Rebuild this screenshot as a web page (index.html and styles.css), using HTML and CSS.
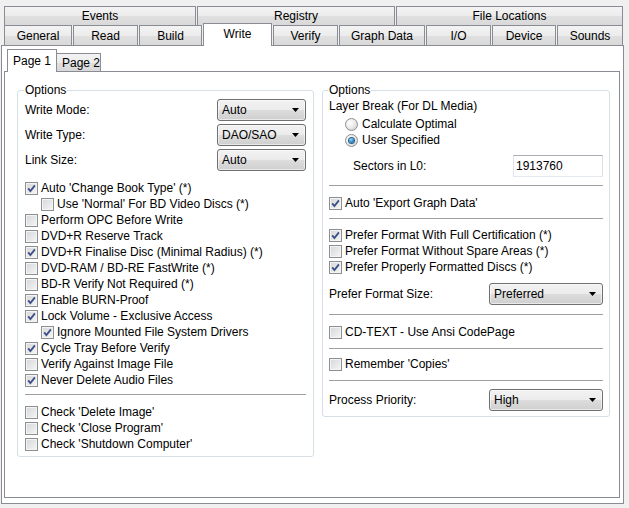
FILE: index.html
```html
<!DOCTYPE html>
<html>
<head>
<meta charset="utf-8">
<link rel="stylesheet" href="styles.css">
</head>
<body>
<div class="window">
  <div class="tabrow row1">
    <div class="tab t-events">Events</div>
    <div class="tab t-registry">Registry</div>
    <div class="tab t-files">File Locations</div>
  </div>
  <div class="tabrow row2">
    <div class="tab t-general">General</div>
    <div class="tab t-read">Read</div>
    <div class="tab t-build">Build</div>
    <div class="tab t-write sel">Write</div>
    <div class="tab t-verify">Verify</div>
    <div class="tab t-graph">Graph Data</div>
    <div class="tab t-io">I/O</div>
    <div class="tab t-device">Device</div>
    <div class="tab t-sounds">Sounds</div>
  </div>
  <div class="panel">
    <div class="subtabs">
      <div class="stab p1 sel">Page 1</div>
      <div class="stab p2">Page 2</div>
    </div>
    <div class="page">
      <div class="cols">
        <div class="group gleft">
          <div class="legend">Options</div>
          <div class="frows">
            <div class="frow"><span>Write Mode:</span><div class="select sel-s"><span>Auto</span><svg class="arrow" width="7" height="4" viewBox="0 0 7 4"><polygon points="0,0 7,0 3.5,4" fill="#000"/></svg></div></div>
            <div class="frow"><span>Write Type:</span><div class="select sel-s"><span>DAO/SAO</span><svg class="arrow" width="7" height="4" viewBox="0 0 7 4"><polygon points="0,0 7,0 3.5,4" fill="#000"/></svg></div></div>
            <div class="frow"><span>Link Size:</span><div class="select sel-s"><span>Auto</span><svg class="arrow" width="7" height="4" viewBox="0 0 7 4"><polygon points="0,0 7,0 3.5,4" fill="#000"/></svg></div></div>
          </div>
          <div class="cblist">
            <div class="cbrow"><span class="cb"><svg viewBox="0 0 11 11"><path d="M2.2 5.4 L4.4 8 L8.9 2.4" fill="none" stroke="#3b4f86" stroke-width="1.8"/></svg></span>Auto 'Change Book Type' (*)</div>
            <div class="cbrow sub"><span class="cb"></span>Use 'Normal' For BD Video Discs (*)</div>
            <div class="cbrow"><span class="cb"></span>Perform OPC Before Write</div>
            <div class="cbrow"><span class="cb"></span>DVD+R Reserve Track</div>
            <div class="cbrow"><span class="cb"><svg viewBox="0 0 11 11"><path d="M2.2 5.4 L4.4 8 L8.9 2.4" fill="none" stroke="#3b4f86" stroke-width="1.8"/></svg></span>DVD+R Finalise Disc (Minimal Radius) (*)</div>
            <div class="cbrow"><span class="cb"></span>DVD-RAM / BD-RE FastWrite (*)</div>
            <div class="cbrow"><span class="cb"></span>BD-R Verify Not Required (*)</div>
            <div class="cbrow"><span class="cb"><svg viewBox="0 0 11 11"><path d="M2.2 5.4 L4.4 8 L8.9 2.4" fill="none" stroke="#3b4f86" stroke-width="1.8"/></svg></span>Enable BURN-Proof</div>
            <div class="cbrow"><span class="cb"><svg viewBox="0 0 11 11"><path d="M2.2 5.4 L4.4 8 L8.9 2.4" fill="none" stroke="#3b4f86" stroke-width="1.8"/></svg></span>Lock Volume - Exclusive Access</div>
            <div class="cbrow sub"><span class="cb"><svg viewBox="0 0 11 11"><path d="M2.2 5.4 L4.4 8 L8.9 2.4" fill="none" stroke="#3b4f86" stroke-width="1.8"/></svg></span>Ignore Mounted File System Drivers</div>
            <div class="cbrow"><span class="cb"><svg viewBox="0 0 11 11"><path d="M2.2 5.4 L4.4 8 L8.9 2.4" fill="none" stroke="#3b4f86" stroke-width="1.8"/></svg></span>Cycle Tray Before Verify</div>
            <div class="cbrow"><span class="cb"></span>Verify Against Image File</div>
            <div class="cbrow"><span class="cb"><svg viewBox="0 0 11 11"><path d="M2.2 5.4 L4.4 8 L8.9 2.4" fill="none" stroke="#3b4f86" stroke-width="1.8"/></svg></span>Never Delete Audio Files</div>
          </div>
          <div class="sep sep-left"></div>
          <div class="cbrow"><span class="cb"></span>Check 'Delete Image'</div>
          <div class="cbrow"><span class="cb"></span>Check 'Close Program'</div>
          <div class="cbrow"><span class="cb"></span>Check 'Shutdown Computer'</div>
        </div>

        <div class="group gright">
          <div class="legend">Options</div>
          <div class="line">Layer Break (For DL Media)</div>
          <div class="radios">
            <div class="rbrow"><span class="rb"></span>Calculate Optimal</div>
            <div class="rbrow"><span class="rb on"></span>User Specified</div>
          </div>
          <div class="srow"><span>Sectors in L0:</span><div class="input">1913760</div></div>
          <div class="sep m-8-8"></div>
          <div class="cbrow"><span class="cb"><svg viewBox="0 0 11 11"><path d="M2.2 5.4 L4.4 8 L8.9 2.4" fill="none" stroke="#3b4f86" stroke-width="1.8"/></svg></span>Auto 'Export Graph Data'</div>
          <div class="sep m-7-7"></div>
          <div class="cbrow"><span class="cb"><svg viewBox="0 0 11 11"><path d="M2.2 5.4 L4.4 8 L8.9 2.4" fill="none" stroke="#3b4f86" stroke-width="1.8"/></svg></span>Prefer Format With Full Certification (*)</div>
          <div class="cbrow"><span class="cb"></span>Prefer Format Without Spare Areas (*)</div>
          <div class="cbrow"><span class="cb"><svg viewBox="0 0 11 11"><path d="M2.2 5.4 L4.4 8 L8.9 2.4" fill="none" stroke="#3b4f86" stroke-width="1.8"/></svg></span>Prefer Properly Formatted Discs (*)</div>
          <div class="frow fmt"><span>Prefer Format Size:</span><div class="select sel-l"><span>Preferred</span><svg class="arrow" width="7" height="4" viewBox="0 0 7 4"><polygon points="0,0 7,0 3.5,4" fill="#000"/></svg></div></div>
          <div class="sep m-9-8"></div>
          <div class="cbrow"><span class="cb"></span>CD-TEXT - Use Ansi CodePage</div>
          <div class="sep m-8-6"></div>
          <div class="cbrow"><span class="cb"></span>Remember 'Copies'</div>
          <div class="sep m-8-7"></div>
          <div class="frow"><span>Process Priority:</span><div class="select sel-l"><span>High</span><svg class="arrow" width="7" height="4" viewBox="0 0 7 4"><polygon points="0,0 7,0 3.5,4" fill="#000"/></svg></div></div>
        </div>
      </div>
    </div>
  </div>
</div>
</body>
</html>
```

FILE: styles.css
```css
* { box-sizing: border-box; }
html, body { margin: 0; padding: 0; }
body {
  width: 629px;
  height: 508px;
  overflow: hidden;
  background: #f0f0f0;
  font-family: "Liberation Sans", Arial, sans-serif;
  font-size: 12px;
  color: #000;
}
.window { padding-top: 6px; }

.tabrow {
  display: flex;
  gap: 1px;
  margin-left: 4px;
  align-items: flex-start;
}
.row1 { height: 19px; }
.row2 { height: 20px; }
.tab {
  height: 100%;
  border: 1px solid #898c95;
  border-bottom: none;
  background: linear-gradient(#f3f3f3, #ececec 50%, #e0e0e0 51%, #d9d9d9);
  display: flex;
  align-items: center;
  justify-content: center;
  white-space: nowrap;
}
.tab.sel {
  position: relative;
  z-index: 1;
  height: 23px;
  margin-top: -2px;
  background: #fff;
  padding-bottom: 2px;
}
.t-events { width: 192px; }
.t-registry { width: 198px; }
.t-files { width: 227px; }
.t-general { width: 68px; }
.t-read { width: 65px; }
.t-build { width: 63px; }
.t-write { width: 69px; }
.t-verify { width: 65px; }
.t-graph { width: 86px; }
.t-io { width: 65px; }
.t-device { width: 64px; }
.t-sounds { width: 66px; }

.panel {
  margin-left: 1px;
  width: 623px;
  height: 459px;
  border: 1px solid #898c95;
  background: #fff;
  padding: 3px 0 0 2px;
}
.subtabs {
  display: flex;
  align-items: flex-end;
  height: 22px;
  margin-left: 3px;
}
.stab {
  height: 18px;
  border: 1px solid #898c95;
  border-bottom: none;
  background: linear-gradient(#f3f3f3, #ececec 50%, #e0e0e0 51%, #d9d9d9);
  display: flex;
  align-items: center;
  padding-left: 5px;
  white-space: nowrap;
}
.stab.p1 { width: 50px; }
.stab.p2 { width: 44px; border-left: none; }
.stab.sel {
  position: relative;
  z-index: 1;
  height: 23px;
  margin-bottom: -1px;
  background: #fff;
}
.page {
  width: 616px;
  height: 427px;
  border: 1px solid #898c95;
  background: #fff;
  padding: 18px 0 0 12px;
}
.cols {
  display: flex;
  gap: 8px;
  align-items: flex-start;
}
.group {
  border: 1px solid #d5dfe5;
  border-radius: 3px;
}
.gleft { width: 297px; padding: 0 7px 4px; }
.gright { width: 288px; padding: 0 6px 5px; }
.legend {
  width: max-content;
  height: 14px;
  line-height: 14px;
  margin: -8px 0 0 -1px;
  padding: 0 1px;
  background: #fff;
}

.frows {
  margin-top: 2px;
  display: flex;
  flex-direction: column;
  gap: 3px;
}
.frow {
  height: 22px;
  display: flex;
  align-items: center;
  justify-content: space-between;
  white-space: nowrap;
}
.frow.fmt { margin-top: 8px; }
.select {
  height: 22px;
  border: 1px solid #707070;
  border-radius: 3px;
  background: linear-gradient(#f2f2f2, #ebebeb 50%, #dddddd 51%, #cfcfcf);
  box-shadow: inset 0 0 0 1px rgba(255,255,255,0.55);
  display: flex;
  align-items: center;
  justify-content: space-between;
  padding: 0 6px 0 4px;
}
.sel-s { width: 89px; }
.sel-l { width: 114px; }
.arrow { display: block; flex: none; }

.cblist { margin-top: 9px; }
.cbrow {
  height: 16px;
  display: flex;
  align-items: center;
  gap: 3px;
  white-space: nowrap;
}
.cbrow.sub { padding-left: 16px; }
.cb {
  flex: none;
  width: 13px;
  height: 13px;
  border: 1px solid #8e8f8f;
  background: linear-gradient(135deg, #d4d6d9, #f6f6f6);
  box-shadow: inset 0 0 0 1px #f4f4f4;
}
.cb svg { display: block; width: 11px; height: 11px; }

.sep {
  border-top: 1px solid #a0a0a0;
  border-bottom: 1px solid #fff;
}
.sep-left { margin: 6px 0 8px; }
.m-8-8 { margin: 8px 0 8px; }
.m-7-7 { margin: 7px 0 7px; }
.m-9-8 { margin: 9px 0 8px; }
.m-8-6 { margin: 8px 0 6px; }
.m-8-7 { margin: 8px 0 7px; }

.line { height: 16px; margin-top: 1px; display: flex; align-items: center; }
.radios { margin-top: 2px; }
.rbrow {
  height: 16px;
  display: flex;
  align-items: center;
  gap: 4px;
  padding-left: 16px;
  white-space: nowrap;
}
.rb {
  flex: none;
  width: 13px;
  height: 13px;
  border-radius: 50%;
  border: 1px solid #8e8f8f;
  background: radial-gradient(circle at 35% 35%, #ffffff 0, #ececec 45%, #c8c8c8 100%);
  display: flex;
  align-items: center;
  justify-content: center;
}
.rb.on::after {
  content: "";
  width: 5px;
  height: 5px;
  border-radius: 50%;
  background: radial-gradient(circle at 40% 35%, #9ad8f7, #1f7fc4 60%, #0e4f80);
  box-shadow: 0 0 0 1px #2f5f8a;
}
.srow {
  height: 22px;
  margin-top: 7px;
  padding-left: 24px;
  display: flex;
  align-items: center;
  justify-content: space-between;
}
.input {
  width: 90px;
  height: 22px;
  border: 1px solid;
  border-color: #abadb3 #dbdfe6 #e3e9ef #e2e3ea;
  padding-left: 2px;
  display: flex;
  align-items: center;
}
```
